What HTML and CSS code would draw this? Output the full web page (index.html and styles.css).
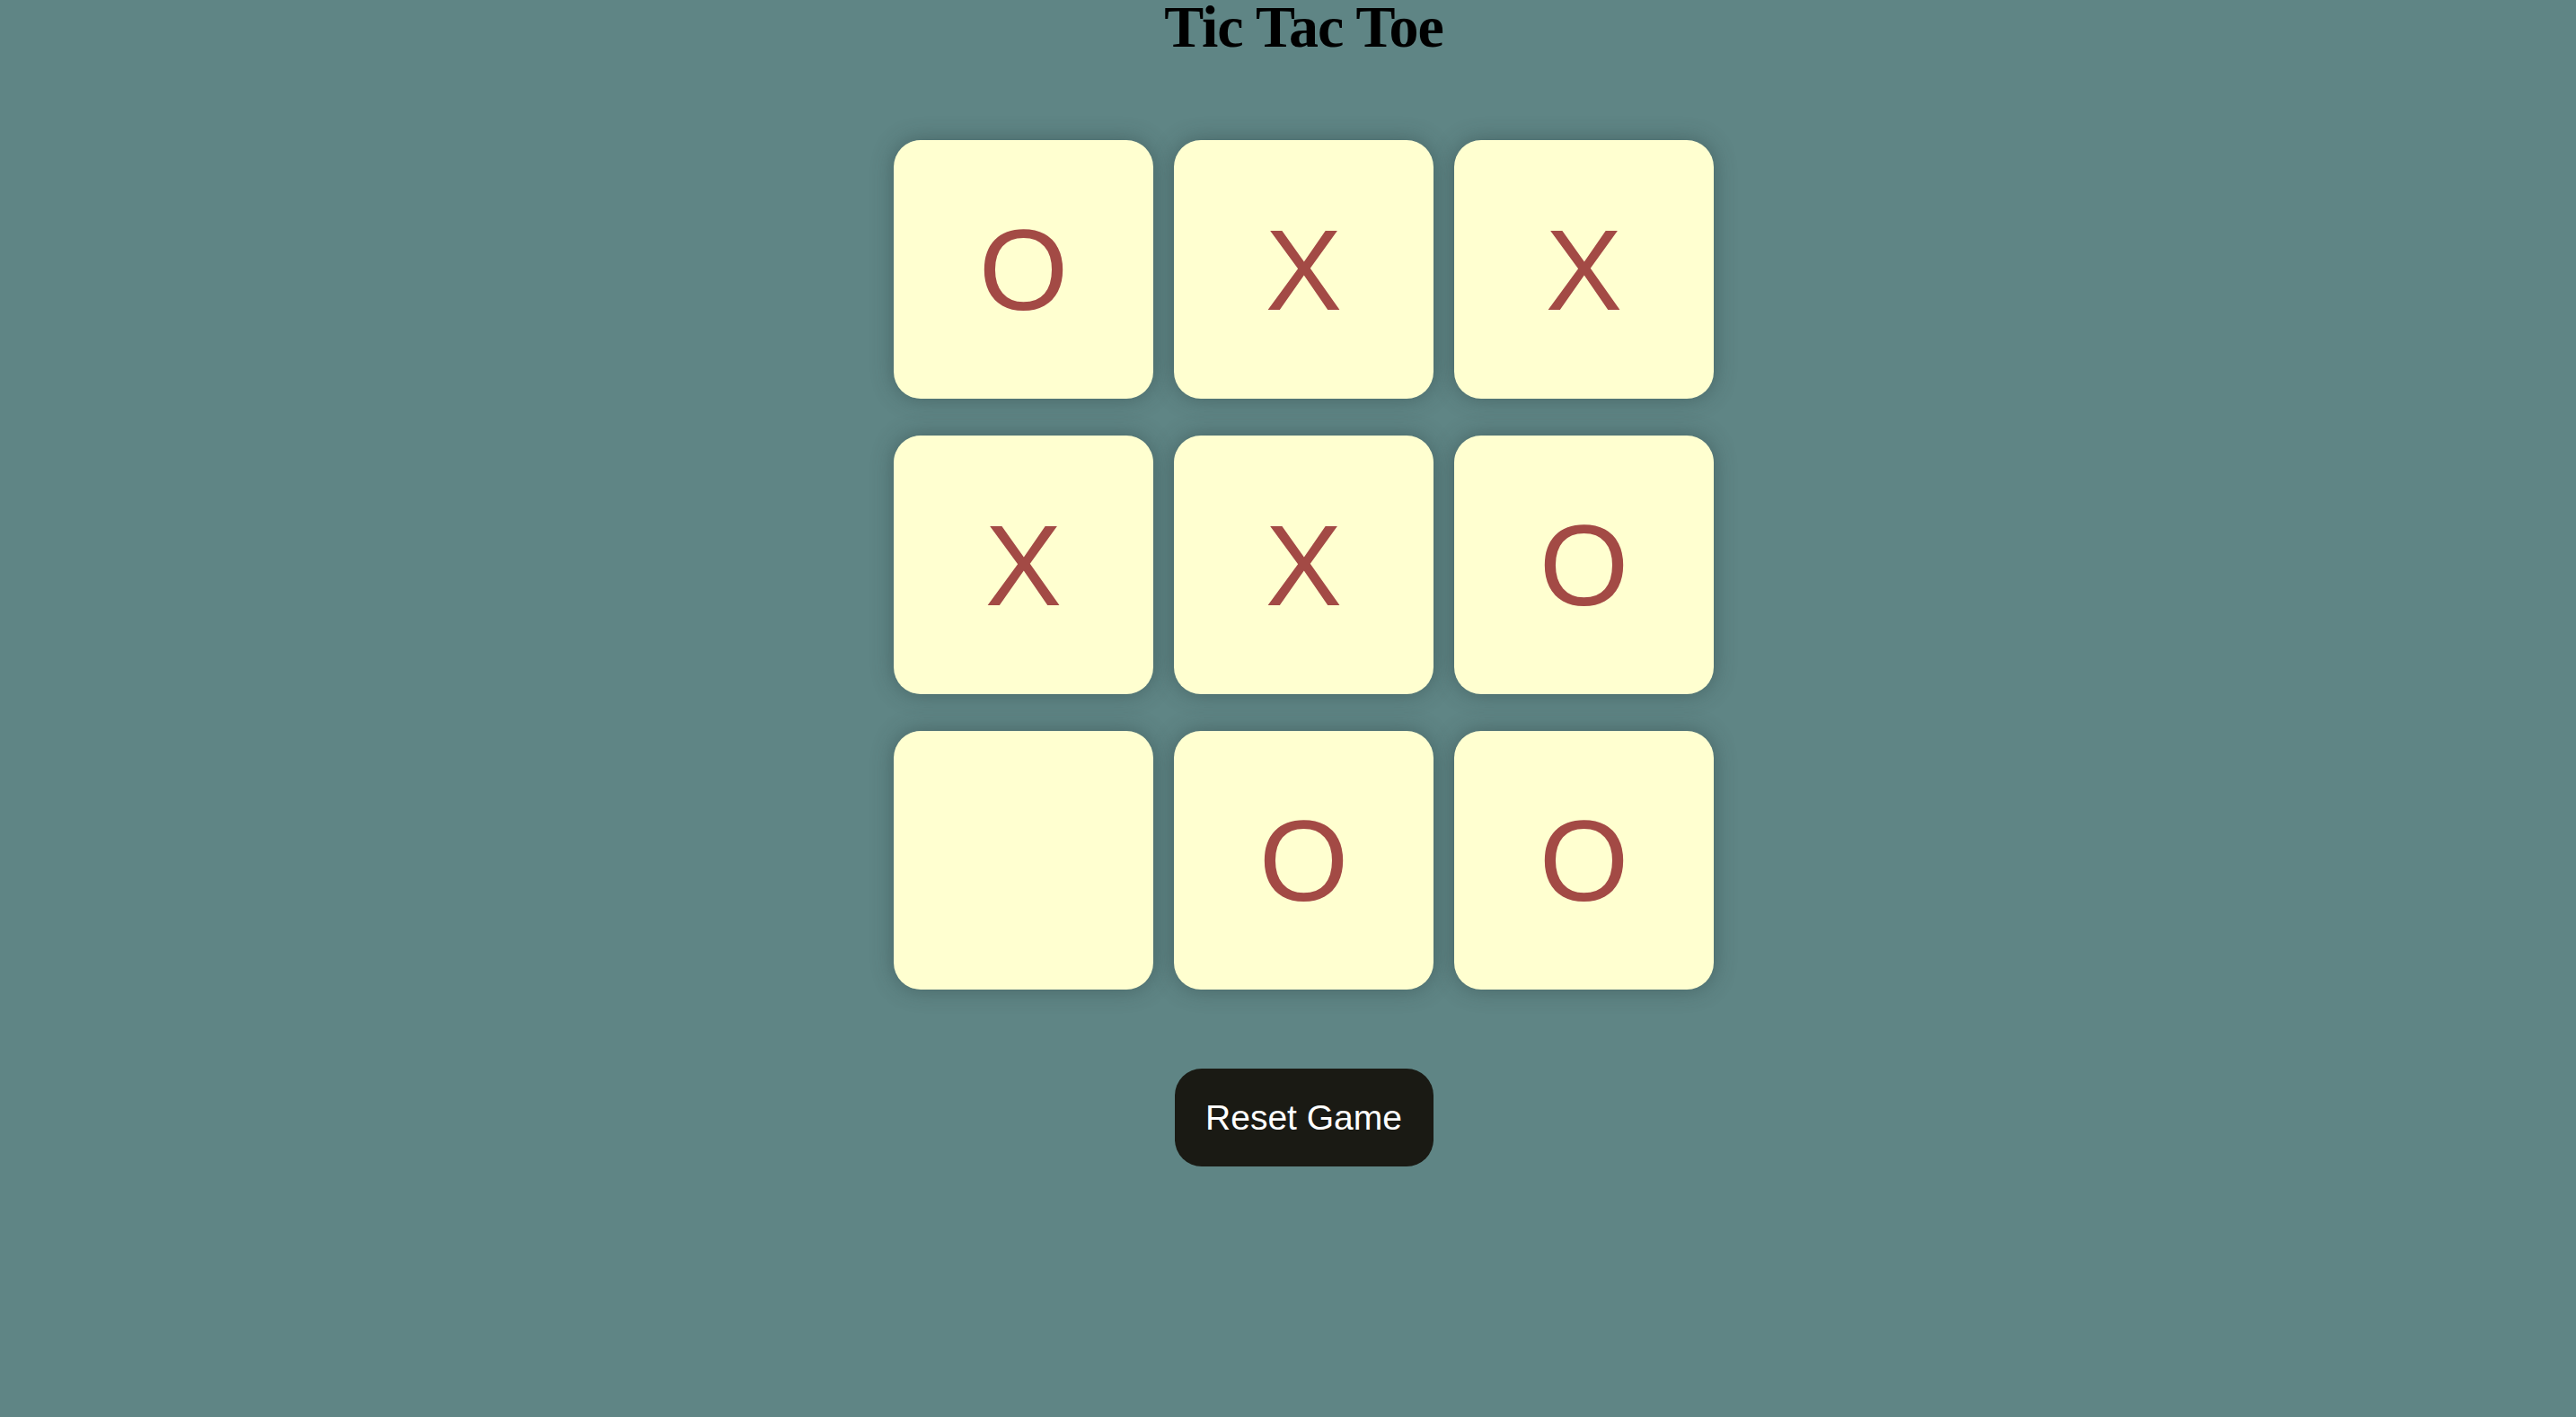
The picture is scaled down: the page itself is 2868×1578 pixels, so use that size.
FILE: index.html
```html
<!DOCTYPE html>
<html>
<head>
<meta charset="utf-8">
<title>Tic Tac Toe</title>
<link rel="stylesheet" href="styles.css">
</head>
<body>
<main class="page">
  <h1 class="title">Tic Tac Toe</h1>
  <div class="board">
    <div class="cell">O</div>
    <div class="cell">X</div>
    <div class="cell">X</div>
    <div class="cell">X</div>
    <div class="cell">X</div>
    <div class="cell">O</div>
    <div class="cell"></div>
    <div class="cell">O</div>
    <div class="cell">O</div>
  </div>
  <button class="reset">Reset Game</button>
</main>
</body>
</html>
```

FILE: styles.css
```css
html, body {
  margin: 0;
  padding: 0;
  background: #5f8585;
  height: 100%;
}
.page {
  display: flex;
  flex-direction: column;
  align-items: center;
  padding-left: 35px;
  min-height: 100%;
  box-sizing: border-box;
}
.title {
  margin: 0;
  font-family: "Liberation Serif", "Times New Roman", serif;
  font-weight: bold;
  font-size: 66px;
  line-height: 0.9;
  letter-spacing: -1px;
  color: #000;
}
.board {
  display: grid;
  grid-template-columns: repeat(3, 289px);
  grid-template-rows: repeat(3, 288px);
  column-gap: 23px;
  row-gap: 41px;
  margin-top: 97px;
}
.cell {
  background: #ffffd0;
  border-radius: 30px;
  box-shadow: 0 0 24px rgba(40, 60, 60, 0.45);
  display: flex;
  align-items: center;
  justify-content: center;
  font-family: "Liberation Sans", Arial, sans-serif;
  font-size: 128px;
  color: #a34a45;
}
.reset {
  margin-top: 88px;
  width: 288px;
  height: 109px;
  border: none;
  border-radius: 30px;
  background: #1a1a14;
  color: #fff;
  font-family: "Liberation Sans", Arial, sans-serif;
  font-size: 39px;
  padding: 0;
}
```
